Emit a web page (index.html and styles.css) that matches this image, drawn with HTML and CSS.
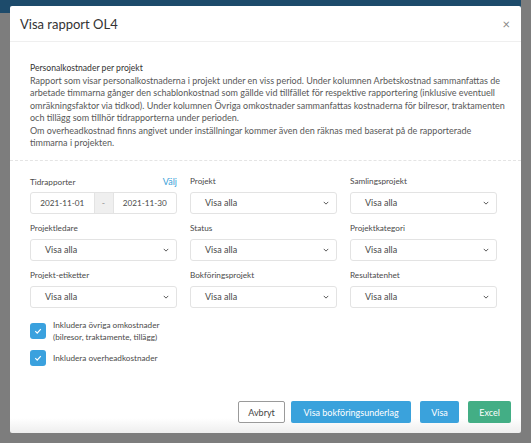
FILE: index.html
```html
<!DOCTYPE html>
<html lang="sv">
<head>
<meta charset="utf-8">
<title>Visa rapport OL4</title>
<link rel="stylesheet" href="styles.css">
</head>
<body>
<div class="backdrop-top"></div>
<div class="modal">
  <div class="modal-header">
    <h1 class="modal-title">Visa rapport OL4</h1>
    <span class="close">×</span>
  </div>
  <div class="modal-body">
    <div class="desc">
      <div class="desc-title">Personalkostnader per projekt</div>
      <p>Rapport som visar personalkostnaderna i projekt under en viss period. Under kolumnen Arbetskostnad sammanfattas de arbetade timmarna gånger den schablonkostnad som gällde vid tillfället för respektive rapportering (inklusive eventuell omräkningsfaktor via tidkod). Under kolumnen Övriga omkostnader sammanfattas kostnaderna för bilresor, traktamenten och tillägg som tillhör tidrapporterna under perioden.</p>
      <p>Om overheadkostnad finns angivet under inställningar kommer även den räknas med baserat på de rapporterade timmarna i projekten.</p>
    </div>
    <div class="form">
      <div class="grid">
        <div class="field">
          <div class="label-row"><span class="label">Tidrapporter</span><span class="link">Välj</span></div>
          <div class="daterange">
            <span class="date">2021-11-01</span>
            <span class="sep">-</span>
            <span class="date">2021-11-30</span>
          </div>
        </div>
        <div class="field">
          <div class="label-row"><span class="label">Projekt</span></div>
          <div class="select"><span>Visa alla</span><svg class="chev" viewBox="0 0 8 5"><path d="M1 1l3 3 3-3"/></svg></div>
        </div>
        <div class="field">
          <div class="label-row"><span class="label">Samlingsprojekt</span></div>
          <div class="select"><span>Visa alla</span><svg class="chev" viewBox="0 0 8 5"><path d="M1 1l3 3 3-3"/></svg></div>
        </div>
        <div class="field">
          <div class="label-row"><span class="label">Projektledare</span></div>
          <div class="select"><span>Visa alla</span><svg class="chev" viewBox="0 0 8 5"><path d="M1 1l3 3 3-3"/></svg></div>
        </div>
        <div class="field">
          <div class="label-row"><span class="label">Status</span></div>
          <div class="select"><span>Visa alla</span><svg class="chev" viewBox="0 0 8 5"><path d="M1 1l3 3 3-3"/></svg></div>
        </div>
        <div class="field">
          <div class="label-row"><span class="label">Projektkategori</span></div>
          <div class="select"><span>Visa alla</span><svg class="chev" viewBox="0 0 8 5"><path d="M1 1l3 3 3-3"/></svg></div>
        </div>
        <div class="field">
          <div class="label-row"><span class="label">Projekt-etiketter</span></div>
          <div class="select"><span>Visa alla</span><svg class="chev" viewBox="0 0 8 5"><path d="M1 1l3 3 3-3"/></svg></div>
        </div>
        <div class="field">
          <div class="label-row"><span class="label">Bokföringsprojekt</span></div>
          <div class="select"><span>Visa alla</span><svg class="chev" viewBox="0 0 8 5"><path d="M1 1l3 3 3-3"/></svg></div>
        </div>
        <div class="field">
          <div class="label-row"><span class="label">Resultatenhet</span></div>
          <div class="select"><span>Visa alla</span><svg class="chev" viewBox="0 0 8 5"><path d="M1 1l3 3 3-3"/></svg></div>
        </div>
      </div>
      <div class="checks">
        <label class="check check-multi">
          <span class="box"><svg viewBox="0 0 10 10"><path d="M2.3 5.2l1.9 1.9 3.6-4"/></svg></span>
          <span class="check-text">Inkludera övriga omkostnader<br>(bilresor, traktamente, tillägg)</span>
        </label>
        <label class="check">
          <span class="box"><svg viewBox="0 0 10 10"><path d="M2.3 5.2l1.9 1.9 3.6-4"/></svg></span>
          <span class="check-text">Inkludera overheadkostnader</span>
        </label>
      </div>
    </div>
  </div>
  <div class="modal-footer">
    <button class="btn btn-default">Avbryt</button>
    <button class="btn btn-primary btn-wide">Visa bokföringsunderlag</button>
    <button class="btn btn-primary btn-visa">Visa</button>
    <button class="btn btn-success">Excel</button>
  </div>
</div>
</body>
</html>
```

FILE: styles.css
```css
* { box-sizing: border-box; }
html, body { margin: 0; padding: 0; }
body {
  width: 531px;
  height: 443px;
  overflow: hidden;
  background: #7d7d7d;
  font-family: Lato, "Open Sans", sans-serif;
  position: relative;
  padding: 6px 10px 0 10px;
}
.backdrop-top {
  position: absolute;
  left: 0; top: 0;
  width: 521px;
  height: 13px;
  background: #1d4b6b;
}
.modal {
  position: relative;
  width: 511px;
  height: 427px;
  background: #fff;
  border-radius: 2px;
  display: flex;
  flex-direction: column;
  background-image: linear-gradient(to bottom, rgba(255,255,255,0) 0, rgba(255,255,255,0) 412px, #eeeeee 427px);
}
.modal-header {
  height: 36px;
  display: flex;
  align-items: center;
  justify-content: space-between;
  padding: 0 11px 0 10px;
  border-bottom: 1px solid #efefef;
}
.modal-title {
  margin: 0;
  font-size: 13px;
  font-weight: 400;
  color: #333;
}
.close {
  font-size: 13px;
  color: #888;
  line-height: 1;
  margin-top: 2px;
}
.modal-body {
  padding: 20px 0 0 0;
  flex: 1;
}
.desc {
  width: 511px;
  font-size: 9px;
  line-height: 12.5px;
  color: #585858;
  padding: 0 10px 10px 20px;
  border-bottom: 1px dashed #e4e4e4;
}
.desc-title {
  color: #333;
  font-size: 8.6px;
}
.desc p { margin: 0; }
.form {
  padding: 15px 0 0 20px;
}
.grid {
  width: 467px;
  display: grid;
  grid-template-columns: repeat(3, 147px);
  column-gap: 13px;
  row-gap: 9px;
}
.label-row {
  display: flex;
  justify-content: space-between;
  align-items: baseline;
  height: 14px;
  margin-bottom: 2px;
}
.label {
  font-size: 8.2px;
  color: #4a4a4a;
}
.link {
  font-size: 9px;
  color: #3aa1d8;
}
.daterange, .select {
  height: 22px;
  border: 1px solid #e3e3e3;
  border-radius: 3px;
  display: flex;
  align-items: center;
  font-size: 9px;
  color: #4a4a4a;
}
.daterange { overflow: hidden; }
.date {
  flex: 1;
  text-align: center;
  font-size: 8.2px;
}
.sep {
  width: 20px;
  align-self: stretch;
  background: #efefef;
  display: flex;
  align-items: center;
  justify-content: center;
  color: #999;
  border-left: 1px solid #e3e3e3;
  border-right: 1px solid #e3e3e3;
}
.select {
  justify-content: space-between;
  padding: 0 7px 0 14px;
}
.chev {
  width: 6px;
  height: 4px;
  fill: none;
  stroke: #555;
  stroke-width: 1.3;
}
.checks {
  padding-top: 15px;
  display: flex;
  flex-direction: column;
  gap: 7px;
}
.check {
  display: flex;
  align-items: center;
  gap: 7px;
}
.check-multi {
  align-items: flex-start;
}
.check-multi .check-text {
  margin-top: -4px;
}
.box {
  width: 16px;
  height: 16px;
  border-radius: 3px;
  background: #3aa1de;
  display: flex;
  align-items: center;
  justify-content: center;
  flex: none;
}
.box svg {
  width: 10px;
  height: 10px;
  fill: none;
  stroke: #fff;
  stroke-width: 1.2;
}
.check-text {
  font-size: 8.2px;
  line-height: 12px;
  color: #4a4a4a;
}
.modal-footer {
  display: flex;
  justify-content: flex-end;
  gap: 6px;
  padding: 0 10px 10px 0;
}
.btn {
  font-family: Lato, "Open Sans", sans-serif;
  height: 22px;
  font-size: 9px;
  border-radius: 2px;
  border: 1px solid transparent;
  padding: 0;
  color: #fff;
  white-space: nowrap;
}
.btn-default {
  background: #fff;
  border-color: #9a9a9a;
  color: #444;
  width: 47px;
}
.btn-primary { background: #3aa2dc; }
.btn-wide { width: 120px; margin-right: 3px; }
.btn-visa { width: 39px; margin-right: 3px; }
.btn-success { background: #43ae85; width: 43px; }
```
